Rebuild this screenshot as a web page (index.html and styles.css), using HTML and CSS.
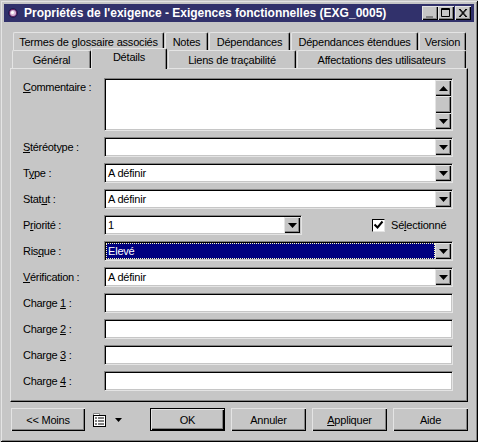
FILE: index.html
```html
<!DOCTYPE html>
<html lang="fr">
<head>
<meta charset="utf-8">
<title>Propriétés de l'exigence</title>
<link rel="stylesheet" href="styles.css">
</head>
<body>
<div class="window">
  <div class="titlebar">
    <svg class="app-icon" width="16" height="16" viewBox="0 0 16 16"><circle cx="8" cy="8" r="4.500" fill="#6a2a6a" stroke="#1c1c50"/><circle cx="8" cy="8" r="3" fill="#d8b8d8"/><circle cx="7.500" cy="7.500" r="1.500" fill="#fff"/></svg>
    <span class="title">Propriétés de l'exigence - Exigences fonctionnelles (EXG_0005)</span>
    <div class="winbtns">
      <span class="winbtn"><svg width="16" height="14" viewBox="0 0 16 14"><rect x="4" y="10" width="7" height="2" fill="#848484"/></svg></span>
      <span class="winbtn"><svg width="16" height="14" viewBox="0 0 16 14"><path d="M3.500 2.500h8v8h-8z M3.500 3.500h8" fill="none" stroke="#000"/></svg></span>
      <span class="winbtn close"><svg width="16" height="14" viewBox="0 0 16 14"><path d="M4 3l7 8M5 3l7 8M11 3l-7 8M12 3l-7 8" stroke="#000"/></svg></span>
    </div>
  </div>
  <div class="tabs back">
    <span class="tab t1">Termes de glossaire associés</span>
    <span class="tab t2">Notes</span>
    <span class="tab t3">Dépendances</span>
    <span class="tab t4">Dépendances étendues</span>
    <span class="tab t5">Version</span>
  </div>
  <div class="tabs front">
    <span class="tab f1">Général</span>
    <span class="tab f2 active">Détails</span>
    <span class="tab f3">Liens de traçabilité</span>
    <span class="tab f4">Affectations des utilisateurs</span>
  </div>
  <div class="panel">
    <div class="row tall">
      <label class="label"><u>C</u>ommentaire :</label>
      <div class="field area">
        <div class="value"></div>
        <div class="scroll">
          <span class="sbtn"><svg width="9" height="5" viewBox="0 0 9 5"><path d="M4.500 0L9 5H0z"/></svg></span>
          <span class="strack"></span>
          <span class="sbtn"><svg width="9" height="5" viewBox="0 0 9 5"><path d="M0 0h9L4.500 5z"/></svg></span>
        </div>
      </div>
    </div>
    <div class="row">
      <label class="label"><u>S</u>téréotype :</label>
      <div class="field"><div class="value"></div><span class="drop"><svg width="9" height="5" viewBox="0 0 9 5"><path d="M0 0h9L4.500 5z"/></svg></span></div>
    </div>
    <div class="row">
      <label class="label">T<u>y</u>pe :</label>
      <div class="field"><div class="value">A définir</div><span class="drop"><svg width="9" height="5" viewBox="0 0 9 5"><path d="M0 0h9L4.500 5z"/></svg></span></div>
    </div>
    <div class="row">
      <label class="label">Stat<u>u</u>t :</label>
      <div class="field"><div class="value">A définir</div><span class="drop"><svg width="9" height="5" viewBox="0 0 9 5"><path d="M0 0h9L4.500 5z"/></svg></span></div>
    </div>
    <div class="row">
      <label class="label">P<u>r</u>iorité :</label>
      <div class="field short"><div class="value">1</div><span class="drop"><svg width="9" height="5" viewBox="0 0 9 5"><path d="M0 0h9L4.500 5z"/></svg></span></div>
      <div class="check">
        <span class="box"><svg width="11" height="11" viewBox="0 0 11 11"><path d="M1.500 4.500l3 3 5-6" fill="none" stroke="#000" stroke-width="2"/></svg></span>
        <span>Sé<u>l</u>ectionné</span>
      </div>
    </div>
    <div class="row">
      <label class="label">Ris<u>q</u>ue :</label>
      <div class="field"><div class="value selected"><span class="seltext">Elevé</span></div><span class="drop"><svg width="9" height="5" viewBox="0 0 9 5"><path d="M0 0h9L4.500 5z"/></svg></span></div>
    </div>
    <div class="row">
      <label class="label"><u>V</u>érification :</label>
      <div class="field"><div class="value">A définir</div><span class="drop"><svg width="9" height="5" viewBox="0 0 9 5"><path d="M0 0h9L4.500 5z"/></svg></span></div>
    </div>
    <div class="row"><label class="label">Charge <u>1</u> :</label><div class="field"><div class="value"></div></div></div>
    <div class="row"><label class="label">Charge <u>2</u> :</label><div class="field"><div class="value"></div></div></div>
    <div class="row"><label class="label">Charge <u>3</u> :</label><div class="field"><div class="value"></div></div></div>
    <div class="row"><label class="label">Charge <u>4</u> :</label><div class="field"><div class="value"></div></div></div>
  </div>
  <div class="footer">
    <span class="btn moins">&lt;&lt; Moins</span>
    <svg class="list-icon" width="15" height="16" viewBox="0 0 15 16"><path d="M1.500 3.500V1.500h6v2" fill="#fff" stroke="#848484"/><rect x="1.500" y="3.500" width="12" height="11" fill="#fff" stroke="#000"/><path d="M3 6h2M6 6h6M3 9h2M6 9h6M3 12h2M6 12h6" stroke="#000"/></svg>
    <svg class="list-arrow" width="7" height="4" viewBox="0 0 7 4"><path d="M0 0h7L3.500 4z"/></svg>
    <span class="btn ok"><span>OK</span></span>
    <span class="btn">Annuler</span>
    <span class="btn"><span><u>A</u>ppliquer</span></span>
    <span class="btn">Aide</span>
  </div>
</div>
</body>
</html>
```
FILE: styles.css
```css
* { box-sizing: border-box; }
html, body { margin: 0; padding: 0; }
body {
  width: 478px;
  height: 442px;
  overflow: hidden;
  background: #c6c6c6;
  font-family: "Liberation Sans", Arial, sans-serif;
  font-size: 11px;
  letter-spacing: -0.2px;
  color: #000;
}
u { text-underline-offset: 1px; }
.window {
  width: 478px;
  height: 442px;
  padding: 4px;
  background: #c6c6c6;
  box-shadow: inset 1px 1px 0 #c6c6c6, inset -1px -1px 0 #000, inset 2px 2px 0 #e4e4e4, inset -2px -2px 0 #848484;
}
.titlebar {
  height: 18px;
  background: #31316b;
  display: flex;
  align-items: center;
  padding: 0 3px 0 1px;
  color: #fff;
}
.app-icon { flex: none; margin-right: 3px; }
.title { font-weight: bold; font-size: 12px; letter-spacing: 0; white-space: nowrap; flex: 1; }
.winbtns { display: flex; }
.winbtn {
  width: 16px;
  height: 14px;
  background: #c6c6c6;
  box-shadow: inset 1px 1px 0 #e4e4e4, inset -1px -1px 0 #000, inset -2px -2px 0 #848484;
  display: flex;
}
.winbtn.close { margin-left: 1px; }
.tabs { display: flex; position: relative; }
.tabs.back { margin: 10px 0 0 9px; height: 18px; }
.tabs.front { margin: 0 0 0 8px; height: 18px; z-index: 2; }
.tab {
  height: 18px;
  display: flex;
  align-items: center;
  justify-content: center;
  white-space: nowrap;
  border-top: 1px solid #e4e4e4;
  border-left: 1px solid #e4e4e4;
  border-right: 1px solid #000;
  border-radius: 2px 2px 0 0;
  box-shadow: inset -1px 0 0 #848484;
}
.t1 { width: 151px; margin-right: 1px; }
.t2 { width: 43px; margin-right: 1px; }
.t3 { width: 81px; margin-right: 1px; }
.t4 { width: 127px; margin-right: 1px; }
.t5 { width: 47px; }
.f1 { width: 79px; }
.f2 { width: 76px; height: 21px; margin-top: -2px; padding-bottom: 4px; background: #c6c6c6; border-bottom: 0; position: relative; z-index: 3; }
.f3 { width: 128px; margin-left: 1px; }
.f4 { width: 169px; margin-left: 1px; }
.panel {
  width: 458px;
  height: 334px;
  margin-left: 6px;
  padding: 9px 0 0 12px;
  border-top: 1px solid #e4e4e4;
  border-left: 1px solid #e4e4e4;
  border-right: 1px solid #000;
  border-bottom: 1px solid #000;
  box-shadow: inset -1px -1px 0 #848484;
  display: flex;
  flex-direction: column;
  gap: 6px;
}
.row { display: flex; align-items: center; height: 20px; }
.row.tall { height: 53px; align-items: flex-start; }
.row.tall .label { padding-top: 3px; }
.label { width: 81px; flex: none; white-space: nowrap; letter-spacing: -0.3px; }
.field {
  width: 349px;
  height: 100%;
  display: flex;
  background: #fff;
  border-top: 1px solid #848484;
  border-left: 1px solid #848484;
  border-right: 1px solid #e4e4e4;
  border-bottom: 1px solid #e4e4e4;
  box-shadow: inset 1px 1px 0 #000, inset -1px -1px 0 #c6c6c6;
  padding: 1px;
}
.field.short { width: 198px; }
.value { flex: 1; min-width: 0; padding-left: 2px; line-height: 16px; white-space: nowrap; display: flex; }
.value.selected { background: #000080; color: #fff; outline: 1px dotted #ffffc0; outline-offset: -1px; }
.drop, .sbtn {
  flex: none;
  width: 16px;
  background: #c6c6c6;
  display: flex;
  align-items: center;
  justify-content: center;
  box-shadow: inset 1px 1px 0 #e4e4e4, inset -1px -1px 0 #000, inset -2px -2px 0 #848484;
}
.drop { height: 100%; }
.scroll { width: 16px; flex: none; display: flex; flex-direction: column; }
.sbtn { height: 16px; }
.strack { flex: 1; background: #c6c6c6; box-shadow: inset 1px 1px 0 #e4e4e4, inset -1px -1px 0 #000, inset -2px -2px 0 #848484; }
.check { margin-left: 70px; display: flex; align-items: center; gap: 6px; white-space: nowrap; }
.box {
  width: 13px;
  height: 13px;
  background: #fff;
  border-top: 1px solid #000;
  border-left: 1px solid #000;
  border-right: 1px solid #e4e4e4;
  border-bottom: 1px solid #e4e4e4;
  display: flex;
}
.footer { display: flex; align-items: center; margin: 6px 0 0 7px; height: 23px; }
.btn {
  width: 75px;
  height: 23px;
  display: flex;
  align-items: center;
  justify-content: center;
  margin-left: 6px;
  box-shadow: inset 1px 1px 0 #e4e4e4, inset -1px -1px 0 #000, inset -2px -2px 0 #848484;
}
.btn.moins { margin-left: 0; width: 74px; }
.list-icon { margin-left: 7px; flex: none; }
.list-arrow { margin-left: 8px; margin-right: 28px; flex: none; }
.btn.ok { border: 1px solid #000; margin-left: 0; }
```
